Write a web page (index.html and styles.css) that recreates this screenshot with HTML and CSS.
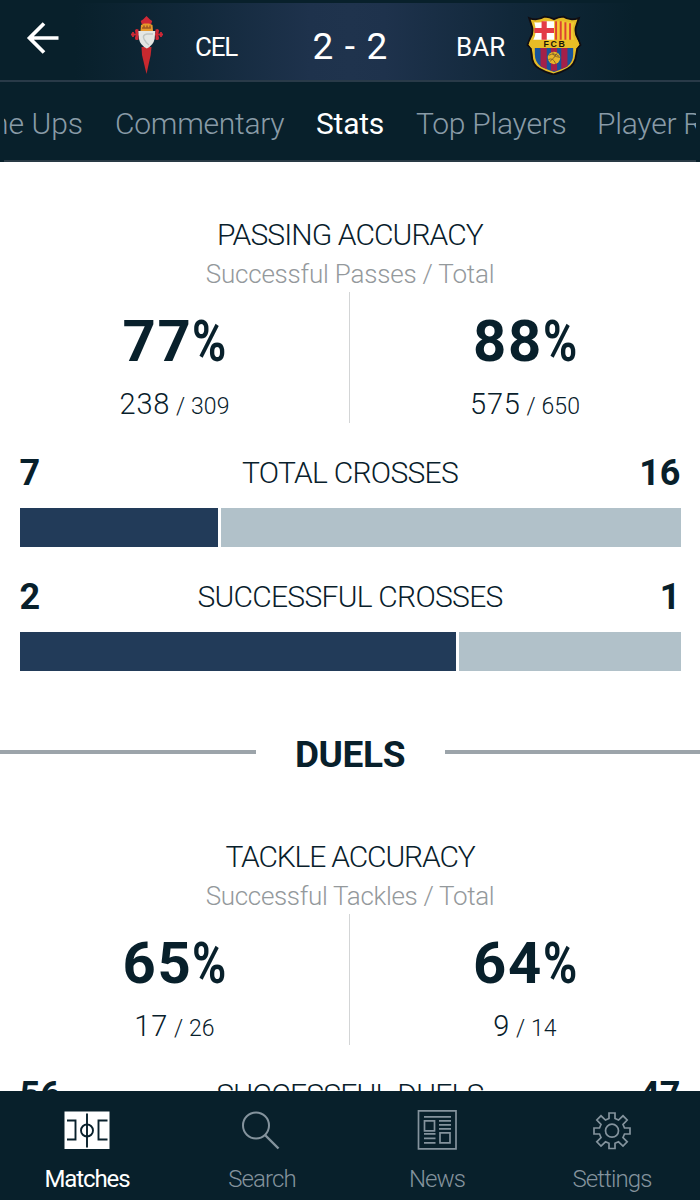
FILE: index.html
```html
<!DOCTYPE html>
<html lang="en">
<head>
<meta charset="utf-8">
<title>Match stats</title>
<link rel="stylesheet" href="styles.css">
</head>
<body>
<div class="app">
  <header class="header">
    <svg class="back" width="34" height="34" viewBox="0 0 34 34" fill="none" stroke="#fff" stroke-width="3.7"><path d="M32.500 17H4M18 2.500 3.500 17 18 31.500"/></svg>
    <svg class="crest-cel" width="36" height="60" viewBox="0 0 36 60">
      <path d="M12.500 32h10l-.8 8L17.500 59 13 40z" fill="#c9292f"/>
      <path d="M17.500 1l3.500 3.500 2.200 1.500-1 3h-9.500l-1-3 2.300-1.500z" fill="#cf2836"/>
      <path d="M2 19.500h8M26 19.500h8M4 17v5M32 17v5" stroke="#cf2836" stroke-width="1.800"/>
      <path d="M9.500 14.500q-3-1.500-3.500 1 0 2 1.500 4-1.500 2-1.500 4 .5 2.500 3.500 1zM26.500 14.500q3-1.500 3.500 1 0 2-1.500 4 1.500 2 1.500 4-.5 2.500-3.500 1z" fill="#cf2836"/>
      <path d="M12 10l3-1.500h5L23.500 10l.5 6H11.500z" fill="#e79a2b"/>
      <path d="M13 13h9M15 10.500v2M18 10.500v2M21 10.500v2" stroke="#7d3620" fill="none"/>
      <path d="M9.300 16h17l-.7 8Q24.500 30 17.800 33.500 11 30 10 24z" fill="#e4e6e3"/>
      <path d="M24 19h-6q-5 1-3 5t5 6" fill="none" stroke="#bfc5c3" stroke-width="1.500"/>
    </svg>
    <span class="team team-home">CEL</span>
    <span class="score">2 - 2</span>
    <span class="team team-away">BAR</span>
    <svg class="crest-bar" width="58" height="60" viewBox="0 0 56 58" preserveAspectRatio="none">
      <path d="M4 3Q12 6 19 1.500q5 .5 9 2.500 4-2 9-2.500Q43 6 52 3l-3 9q-1 6 2 10.500l2.500 6.500-3 3-1 6q-1 10-8.500 14-7 4-13.500 5.500Q21 56 14 52 6.500 48 6.500 38l-1-6-3-3L5 22.500Q8 18 7 12z" fill="#e6bc27" stroke="#100d12" stroke-width="1.800"/>
      <path d="M9 7Q15 8 19 6h9v18H8Q12 17 9 7z" fill="#fff"/>
      <path d="M18.500 6v18M9 15h19" stroke="#e33b46" stroke-width="5"/>
      <path d="M28 6h9q5 2 10.500 1-3 10 0 17H28z" fill="#f4ca35"/>
      <path d="M30 6v18M34.500 6v18M39 7v17M43.500 8v16" stroke="#dc4330" stroke-width="1.900"/>
      <path d="M9.500 32h37v6q0 8-6 12Q34 53 28 55 22 53 15.500 50q-6-4-6-12z" fill="#17539b"/>
      <path d="M15 32h6v20.500l-6-3zM25 32h6v22h-6zM35 32h6v17.500l-6 3z" fill="#a42049"/>
      <path d="M5 24.500h46l1.500 4L50 32H6l-2.500-3.500z" fill="#e8bd25"/>
      <text x="29" y="31.300" class="crest-text">FCB</text>
      <circle cx="28" cy="41.500" r="6" fill="#e7b729"/>
      <path d="M23 39q5-3 10 1M22.500 43q5-2 7 4M27 36q-1 4 7 5M31 37q-3 5-7 8" fill="none" stroke="#77572b" stroke-width=".8"/>
    </svg>
  </header>
  <nav class="tabs">
    <span class="tab tab-first">Line Ups</span>
    <span class="tab tab-commentary">Commentary</span>
    <span class="tab tab-active">Stats</span>
    <span class="tab tab-top">Top Players</span>
    <span class="tab">Player Ratings</span>
  </nav>
  <main class="content">
    <section class="accuracy">
      <h2 class="title">PASSING ACCURACY</h2>
      <p class="subtitle">Successful Passes / Total</p>
      <div class="split">
        <div class="side"><div class="pct">77<span class="sign">%</span></div><div class="ratio">238<small> / 309</small></div></div>
        <div class="side"><div class="pct">88<span class="sign">%</span></div><div class="ratio">575<small> / 650</small></div></div>
      </div>
    </section>
    <section class="stat">
      <div class="stat-row"><b>7</b><span class="label">TOTAL CROSSES</span><b>16</b></div>
      <div class="bar"><i class="home" style="width:198.500px"></i><i class="away"></i></div>
    </section>
    <section class="stat">
      <div class="stat-row"><b>2</b><span class="label">SUCCESSFUL CROSSES</span><b>1</b></div>
      <div class="bar"><i class="home" style="width:436.500px"></i><i class="away"></i></div>
    </section>
    <div class="divider"><h1>DUELS</h1></div>
    <section class="accuracy">
      <h2 class="title title-tackles">TACKLE ACCURACY</h2>
      <p class="subtitle subtitle-tackles">Successful Tackles / Total</p>
      <div class="split">
        <div class="side"><div class="pct">65<span class="sign">%</span></div><div class="ratio">17<small> / 26</small></div></div>
        <div class="side"><div class="pct">64<span class="sign">%</span></div><div class="ratio">9<small> / 14</small></div></div>
      </div>
    </section>
    <section class="stat">
      <div class="stat-row"><b>56</b><span class="label">SUCCESSFUL DUELS</span><b>47</b></div>
    </section>
  </main>
  <footer class="nav">
    <div class="item item-active">
      <svg width="46" height="40" viewBox="0 0 46 40"><path d="M.5 1.500h45v37.500H.500z" fill="#fff"/><path d="M3 10.500h8.500v19H3M43.500 10.500H34.500v19h9M23 3.500v34" fill="none" stroke="#08202b" stroke-width="1.900"/><circle cx="23" cy="20.500" r="6" fill="none" stroke="#08202b" stroke-width="1.900"/></svg>
      <span>Matches</span>
    </div>
    <div class="item">
      <svg class="search-icon" width="40" height="40" viewBox="0 0 40 40" fill="none" stroke="#84939d" stroke-width="2"><circle cx="16" cy="15.500" r="13"/><path d="M25 25l13.500 13.500" stroke-width="2.400"/></svg>
      <span>Search</span>
    </div>
    <div class="item">
      <svg width="40" height="40" viewBox="0 0 40 40" fill="none" stroke="#84939d" stroke-width="1.700"><path d="M1.500 .9h37.500v38H1.500zM7.500 10.900h10v10h-10zM23 22.900h10v10H23zM7 6.900h27M22 10.900h12M22 14.900h12M22 18.900h12M7 23.900h11.500M7 28.400h11.500M7 32.900h11.500"/></svg>
      <span>News</span>
    </div>
    <div class="item">
      <svg width="40" height="40" viewBox="0 0 40 40" fill="none" stroke="#84939d" stroke-width="1.700"><path d="M17 3h6V8.500l3.500 1.500L31 5.800l4.200 4.200-4.200 4.500 1.500 3.500H38v6h-5.500L31 27.500l4.200 4.300L31 36l-4.500-4.200L23 33.300v5.200h-6v-5.200l-3.500-1.500L9 36l-4.200-4.200L9 27.500 7.500 24H2v-6h5.500L9 14.500 4.800 10 9 5.800l4.500 4.200L17 8.500z"/><circle cx="20" cy="20.700" r="6.500"/></svg>
      <span>Settings</span>
    </div>
  </footer>
</div>
</body>
</html>
```
FILE: styles.css
```css
* { box-sizing: border-box; }
body { margin: 0; font-family: Roboto, "Open Sans", sans-serif; color: #08202b; background: #fff; }
h1, h2, p { margin: 0; }
.app { width: 700px; height: 1200px; display: flex; flex-direction: column; overflow: hidden; }
.header {
  flex: 0 0 82px; display: grid; align-items: start;
  grid-template-columns: 26px 103px 66px 95px 121px 95px 1fr;
  color: #fff; border-bottom: 2px solid #293a48;
  background: linear-gradient(#08202b 3px, transparent 3px),
    linear-gradient(90deg, #08202b 75px, #11283a 190px, #1e324c 310px, #1f334d 350px, #1e324c 385px, #11283a 510px, #08202b 635px);
}
.back { grid-column: 2; margin-top: 21px; }
.crest-cel { margin-top: 15px; }
.team { font-size: 26px; line-height: 40px; margin-top: 27px; white-space: nowrap; }
.team-home { letter-spacing: -1.2px; }
.score { font-size: 37px; line-height: 44px; margin-top: 25px; text-align: center; white-space: nowrap; letter-spacing: 1.2px; }
.team-away { padding-left: 45px; }
.crest-bar { margin: 15px 0 0 19px; }
.crest-text { font: bold 8.5px "Liberation Sans", sans-serif; letter-spacing: 1.6px; text-anchor: middle; fill: #171408; }
.tabs {
  flex: 0 0 80px; display: grid; grid-template-columns: 79px 201px 100px 181px 1fr;
  border: solid #08202b; border-width: 0 4px; background: linear-gradient(#08202b 78px, #293a45 78px);
  overflow: hidden; color: #899ba7; font-size: 30px; line-height: 83px; font-weight: 300; white-space: nowrap;
}
.tab { padding-left: 32px; letter-spacing: -.25px; }
.tab-first { justify-self: end; padding: 0; letter-spacing: 0; }
.tab-active { color: #fff; font-weight: 400; }
.content { flex: 1; min-height: 0; overflow: hidden; padding-top: 53px; }
.accuracy { height: 208px; text-align: center; }
.title { font-size: 30px; line-height: 39px; font-weight: 300; letter-spacing: -.9px; }
.title-tackles { letter-spacing: -1.15px; }
.subtitle { font-size: 26px; line-height: 38px; font-weight: 300; color: #94999c; padding-top: 1px; height: 38px; letter-spacing: -.2px; }
.subtitle-tackles { letter-spacing: -.32px; }
.split { display: grid; grid-template: 131px / 350px 350px; height: 131px; }
.side { padding-top: 14px; }
.side:first-child { border-right: 1px solid #d3d5d6; }
.pct { font-size: 58px; line-height: 70px; font-weight: 700; letter-spacing: 1.6px; }
.sign { display: inline-block; width: 34px; letter-spacing: 0; transform: scaleX(.8); transform-origin: left; }
.ratio { font-size: 29px; line-height: 40px; margin-top: 8px; font-weight: 300; letter-spacing: .9px; }
.ratio small { font-size: 23px; letter-spacing: .1px; }
.stat { padding: 25px 19.500px 0 19.500px; }
.stat-row { display: grid; grid-template-columns: 80px 1fr 80px; line-height: 48px; height: 48px; text-align: center; }
.stat-row b { font-size: 36px; text-align: left; padding-top: 1px; }
.stat-row b:last-child { text-align: right; }
.label { font-size: 30px; font-weight: 300; letter-spacing: -.72px; padding-top: 1px; }
.bar { display: flex; gap: 3px; height: 39px; margin-top: 12px; }
.home { background: #223b59; }
.away { background: #b1c1c9; flex: 1; }
.divider { display: flex; align-items: center; height: 48px; margin: 60px 0 58px; }
.divider::before, .divider::after { content: ""; flex: 1; height: 4px; background: #9ca4aa; margin-bottom: 6px; }
.divider h1 { width: 189px; text-align: center; font-size: 37px; line-height: 48px; letter-spacing: -.4px; }
.nav { flex: 0 0 109px; display: grid; grid-template-columns: repeat(4, 175px); background: #08202b; }
.item { display: flex; flex-direction: column; align-items: center; padding: 19px 1px 0 0; font-size: 24px; line-height: 34px; font-weight: 300; color: #84939d; letter-spacing: -.9px; }
.search-icon { margin-right: 4px; }
.item span { margin-top: 12px; }
.item-active { color: #fff; font-weight: 400; letter-spacing: -1.100px; }
```
